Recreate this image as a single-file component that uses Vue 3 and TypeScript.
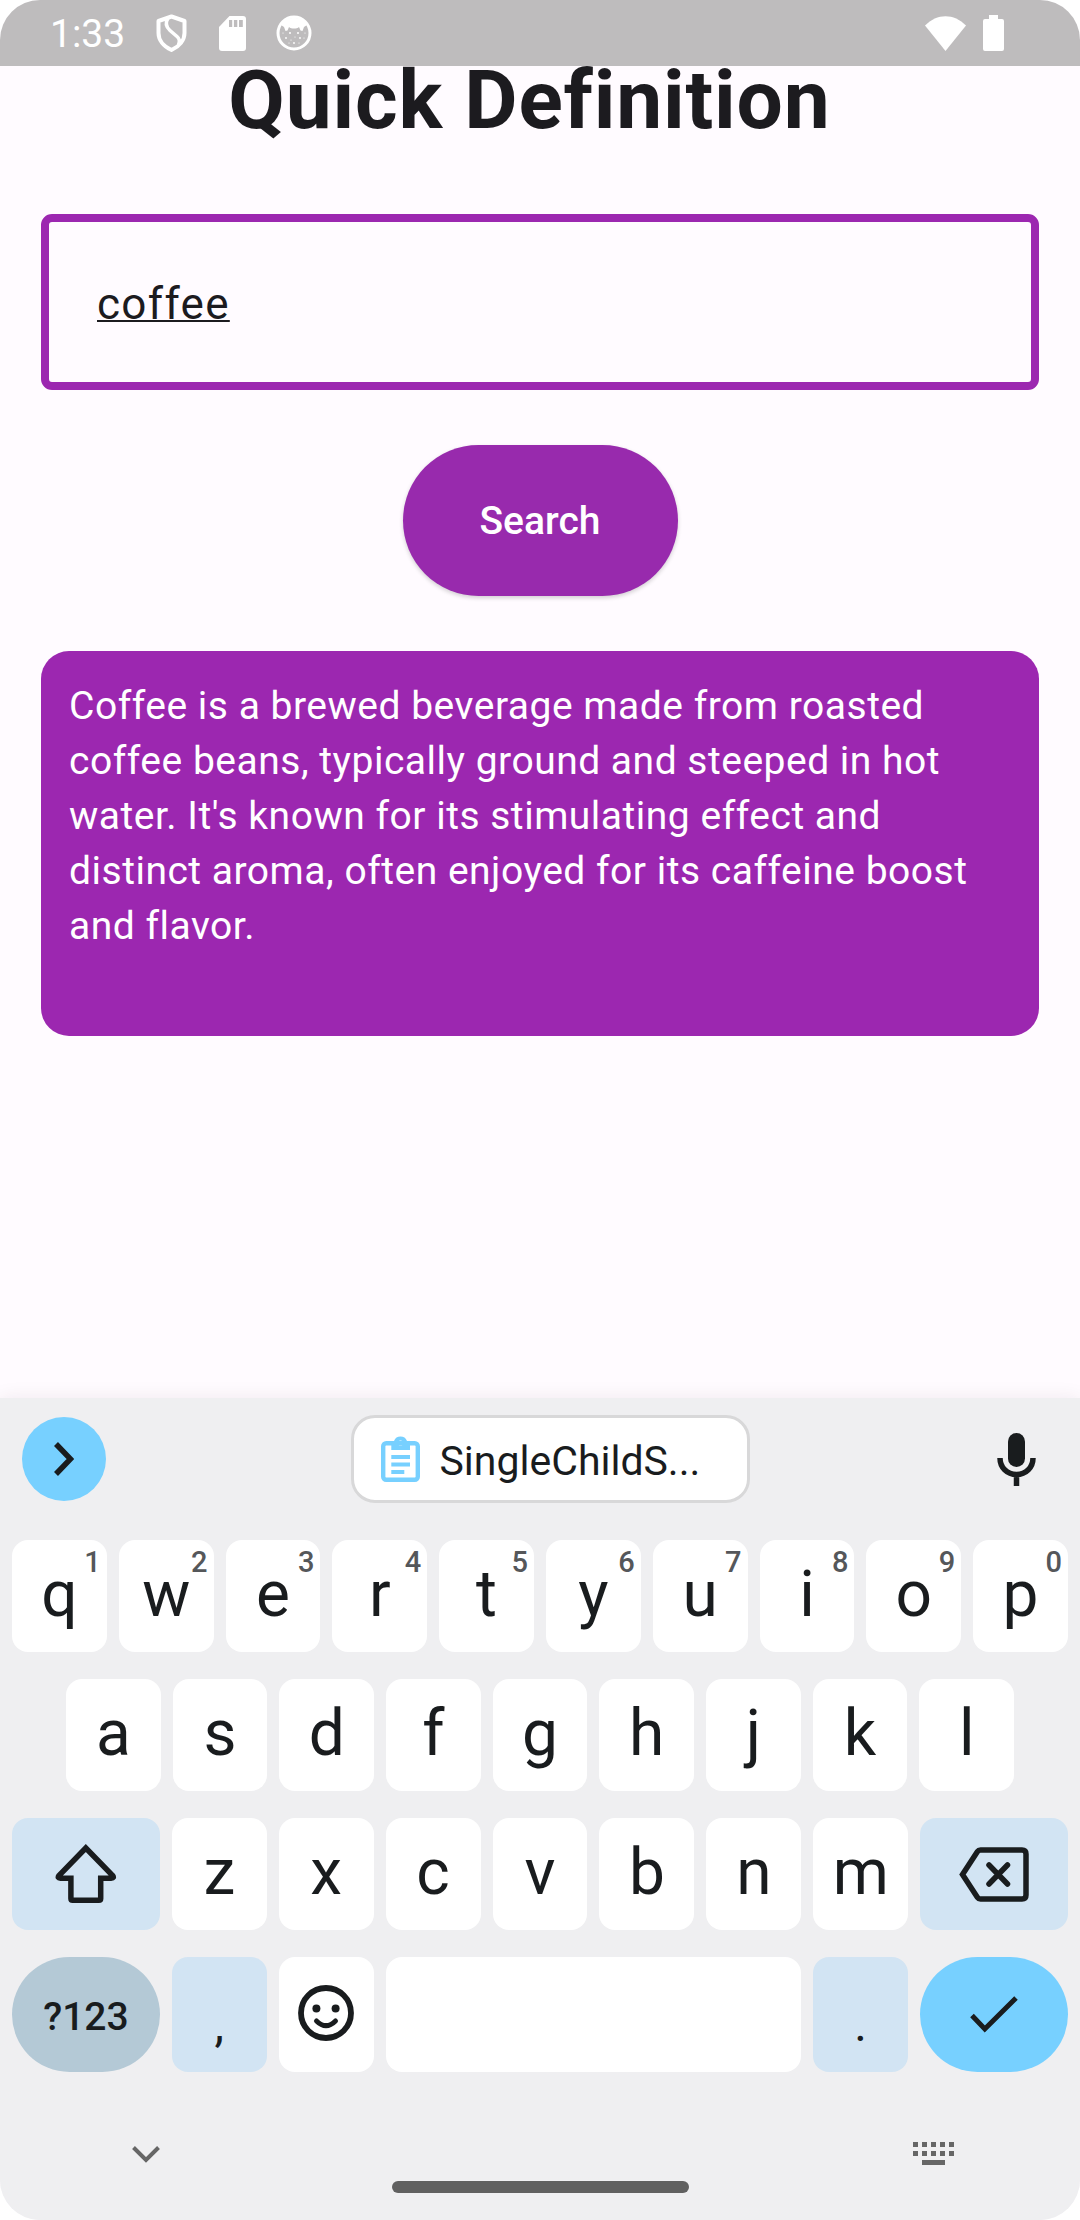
<script setup lang="ts">
import { ref } from 'vue'

interface Key {
  label: string
  hint?: string
}

const term = ref<string>('coffee')
const definition = ref<string>(
  "Coffee is a brewed beverage made from roasted coffee beans, typically ground and steeped in hot water. It's known for its stimulating effect and distinct aroma, often enjoyed for its caffeine boost and flavor."
)

const topRow: Key[] = [...'qwertyuiop'].map((label, i) => ({ label, hint: String((i + 1) % 10) }))
const homeRow: string[] = [...'asdfghjkl']
const bottomRow: string[] = [...'zxcvbnm']
const dotColumns: number[] = [0, 9, 18, 27, 36]

function press(char: string): void {
  term.value += char
}

function erase(): void {
  term.value = term.value.slice(0, -1)
}
</script>

<template>
  <div class="screen">
    <header class="status">
      <div class="status-group">
        <span class="clock">1:33</span>
        <svg class="shield" width="31" height="38" viewBox="0 0 31 38" fill="none" stroke="#fff" stroke-width="4">
          <path d="M15.500 2.500L28.500 7v12c0 7-5 13.500-13 17c-8-3.500-13-10-13-17V7z" stroke-linejoin="round" />
          <path d="M12 4c-3 5-2 9 2 12.500l7 6c3 2.500 3 5 1.500 8" stroke-width="3.500" />
        </svg>
        <svg class="sd" width="27" height="35" viewBox="0 0 27 35">
          <path fill="#fff" d="M10.500 0H24a3 3 0 0 1 3 3v29a3 3 0 0 1-3 3H3a3 3 0 0 1-3-3V11z" />
          <path fill="#bebcbd" d="M10 4h3.200v7H10zM14.900 4h3.400v7h-3.400zM20 4h3.800v7H20z" />
        </svg>
        <svg class="face" width="36" height="36" viewBox="0 0 36 36">
          <circle cx="18" cy="18" r="16" fill="none" stroke="#fff" stroke-width="3" />
          <path fill="#fff" d="M5 10C10 .5 26 .5 31 10l-3 2-1.500 4-2-.500-1.500-3.500c-2 2-8 2-10 0l-1.500 3.500-2 .500L8 12z" />
          <g fill="#fff">
            <circle cx="14" cy="18" r="1" /><circle cx="22" cy="18" r="1" />
            <circle cx="7" cy="18" r=".6" /><circle cx="29" cy="18" r=".6" />
            <circle cx="10" cy="23" r=".9" /><circle cx="15" cy="25" r=".6" />
            <circle cx="19" cy="22" r=".6" /><circle cx="24" cy="23" r=".9" />
            <circle cx="28" cy="23" r=".6" /><circle cx="13" cy="28" r=".6" />
            <circle cx="18" cy="28" r=".9" /><circle cx="23" cy="28" r=".6" />
          </g>
        </svg>
      </div>
      <div class="status-group">
        <svg width="41" height="35" viewBox="0 0 41 35" fill="#fff">
          <path d="M0 9.500C12-3 29-3 41 9.500L20.500 35z" />
        </svg>
        <svg class="battery" width="21" height="36" viewBox="0 0 21 36" fill="#fff">
          <path d="M6 0h9v4h4a2 2 0 0 1 2 2v28a2 2 0 0 1-2 2H2a2 2 0 0 1-2-2V6a2 2 0 0 1 2-2h4z" />
        </svg>
      </div>
    </header>

    <main class="content">
      <h1 class="title">{{ 'Quick Definition ' }}</h1>
      <input v-model="term" class="field" type="text" aria-label="Word to define" spellcheck="false" />
      <button class="search" type="button">Search</button>
      <p class="card">{{ definition }}</p>
    </main>

    <section class="keyboard" aria-label="Keyboard">
      <div class="suggestions">
        <button class="expand" type="button" aria-label="More tools">
          <svg width="20" height="34" viewBox="0 0 20 34" fill="none" stroke="#191c1e" stroke-width="5.500">
            <path d="M2 2l14.500 15L2 32" />
          </svg>
        </button>
        <button class="clip" type="button">
          <svg width="39" height="47" viewBox="0 0 39 47" fill="#77d0ff">
            <rect x="2.200" y="7.200" width="34.600" height="36.600" rx="3" fill="none" stroke="#77d0ff" stroke-width="4.400" />
            <path fill-rule="evenodd" d="M10.300 5H13a7 7 0 0 1 13 0h3v9H10.300zM19.500 4.400a2.600 2.600 0 1 0 0 5.200 2.600 2.600 0 0 0 0-5.200z" />
            <path d="M10.300 19H29v4H10.300zM10.300 26.500H29v4H10.300zM10.300 34h13v4h-13z" />
          </svg>
          <span class="clip-text">SingleChildS...</span>
        </button>
        <button class="mic" type="button" aria-label="Voice input">
          <svg width="39" height="53" viewBox="0 0 39 53">
            <rect x="11" y="0" width="17" height="34" rx="8.500" fill="#191c1e" />
            <path d="M3 25c0 9.500 7 16.500 16.500 16.500S36 34.500 36 25M19.500 41v12" fill="none" stroke="#191c1e" stroke-width="5.500" />
          </svg>
        </button>
      </div>

      <div class="rows">
        <div class="row">
          <button v-for="key in topRow" :key="key.label" class="key" type="button" @click="press(key.label)">
            {{ key.label }}<span class="hint">{{ key.hint }}</span>
          </button>
        </div>
        <div class="row inset">
          <button v-for="char in homeRow" :key="char" class="key" type="button" @click="press(char)">{{ char }}</button>
        </div>
        <div class="row">
          <button class="key wide tinted icon" type="button" aria-label="Shift">
            <svg width="62" height="60" viewBox="0 0 62 60" fill="none" stroke="#191c1e" stroke-width="5.500">
              <path d="M30.800 4L57.600 31.500q2 2.700-1.400 2.700H45.700V54.500q0 1.800-1.800 1.800H17.700q-1.800 0-1.800-1.800V34.200H5.400q-3.400 0-1.400-2.700z" />
            </svg>
          </button>
          <button v-for="char in bottomRow" :key="char" class="key" type="button" @click="press(char)">{{ char }}</button>
          <button class="key wide tinted icon" type="button" aria-label="Backspace" @click="erase">
            <svg width="70" height="55" viewBox="0 0 70 55" fill="none" stroke="#191c1e" stroke-width="5.500" stroke-linecap="round">
              <path d="M21.500 3H63q4 0 4 4V48q0 4-4 4H21.500q-2 0-3-1.500L3.500 27.500L18.500 4.500q1-1.500 3-1.500z" />
              <path d="M30 18l18.500 19M48.500 18L30 37" />
            </svg>
          </button>
        </div>
        <div class="row last">
          <button class="key wide symbols" type="button">?123</button>
          <button class="key tinted mark" type="button" @click="press(',')">,</button>
          <button class="key" type="button" aria-label="Emoji">
            <svg width="56" height="56" viewBox="0 0 56 56" fill="none" stroke="#191c1e">
              <circle cx="28" cy="28" r="25" stroke-width="5.800" />
              <circle cx="18.400" cy="23.400" r="4" fill="#191c1e" stroke="none" />
              <circle cx="37.600" cy="23.400" r="4" fill="#191c1e" stroke="none" />
              <path d="M18.500 36q9.500 9.500 19 0" stroke-width="5" stroke-linecap="round" />
            </svg>
          </button>
          <button class="key space" type="button" aria-label="Space" @click="press(' ')"></button>
          <button class="key tinted mark" type="button" @click="press('.')">.</button>
          <button class="key wide enter icon" type="button" aria-label="Done">
            <svg width="48" height="37" viewBox="0 0 48 37" fill="none" stroke="#191c1e" stroke-width="5">
              <path d="M2 19.500L14.800 33L46 2" />
            </svg>
          </button>
        </div>
      </div>

      <nav class="ime-nav">
        <button class="nav-button" type="button" aria-label="Hide keyboard">
          <svg width="28" height="17" viewBox="0 0 28 17" fill="none" stroke="#666" stroke-width="4">
            <path d="M1.500 1.500L14 14L26.500 1.500" />
          </svg>
        </button>
        <button class="nav-button" type="button" aria-label="Switch keyboard">
          <svg width="42" height="24" viewBox="0 0 42 24" fill="#666">
            <template v-for="x in dotColumns" :key="x">
              <rect :x="x" y="0" width="5" height="5" />
              <rect :x="x" y="9" width="5" height="5" />
            </template>
            <rect x="9" y="18" width="23" height="5" />
          </svg>
        </button>
      </nav>
      <div class="home-bar"></div>
    </section>
  </div>
</template>

<style>
body {
  margin: 0;
  background: #fff;
}
</style>

<style scoped>
.screen {
  display: flex;
  flex-direction: column;
  min-height: 100vh;
  border-radius: 40px;
  overflow: hidden;
  background: #fffbff;
  font-family: Roboto, 'Liberation Sans', sans-serif;
  color: #1c1b1f;
}

button {
  border: 0;
  padding: 0;
  font: inherit;
  color: inherit;
  cursor: pointer;
}

svg {
  display: block;
  flex: none;
}

.status {
  display: flex;
  align-items: center;
  justify-content: space-between;
  height: 66px;
  padding: 0 76px 0 50px;
  background: #bebcbd;
  color: #fff;
}

.status-group {
  display: flex;
  align-items: center;
}

.clock {
  padding-top: 2px;
  font-size: 39px;
  line-height: 64px;
}

.shield {
  margin-left: 31px;
}

.sd {
  margin-left: 32px;
}

.face {
  margin-left: 30px;
}

.battery {
  margin-left: 17px;
}

.content {
  flex: 1;
  display: flex;
  flex-direction: column;
  align-items: center;
  padding: 0 41px;
}

.title {
  margin: 0 0 80px;
  font-size: 82px;
  line-height: 68px;
  font-weight: 700;
  letter-spacing: 0.01em;
  white-space: pre;
}

.field {
  box-sizing: border-box;
  width: 100%;
  height: 176px;
  padding: 4px 48px 0;
  border: 8px solid #9c27b0;
  border-radius: 11px;
  outline: 0;
  background: transparent;
  font: inherit;
  font-size: 44px;
  letter-spacing: 0.03em;
  color: inherit;
  text-decoration: underline;
  text-decoration-thickness: 2px;
}

.search {
  width: 275px;
  height: 151px;
  margin: 55px 0;
  border-radius: 76px;
  background: #982aad;
  box-shadow: 0 2px 4px rgba(0, 0, 0, 0.18);
  color: #fff;
  font-size: 39px;
  font-weight: 500;
}

.card {
  box-sizing: border-box;
  width: 100%;
  min-height: 385px;
  margin: 0;
  padding: 28px;
  border-radius: 28px;
  background: #9c27b0;
  color: #fff;
  font-size: 39px;
  line-height: 55px;
  letter-spacing: 0.013em;
}

.keyboard {
  display: flex;
  flex-direction: column;
  padding: 17px 12px 27px;
  background: #efeff1;
  box-shadow: 0 0 18px rgba(60, 20, 40, 0.08);
  color: #191c1e;
}

.suggestions {
  display: flex;
  align-items: center;
  justify-content: space-between;
  height: 88px;
  padding: 0 10px;
}

.expand,
.mic {
  display: flex;
  align-items: center;
  justify-content: center;
  width: 84px;
  height: 84px;
  border-radius: 42px;
  background: transparent;
}

.expand {
  background: #77d0ff;
}

.clip {
  display: flex;
  align-items: center;
  gap: 20px;
  box-sizing: border-box;
  width: 399px;
  height: 88px;
  margin-left: 20px;
  padding: 0 27px;
  border: 3px solid #d8d8d9;
  border-radius: 24px;
  background: #fff;
  font-size: 41px;
}

.clip-text {
  padding-top: 4px;
}

.rows {
  display: flex;
  flex-direction: column;
  gap: 27px;
  margin-top: 37px;
}

.row {
  display: flex;
  gap: 12px;
  height: 112px;
}

.row.inset {
  padding: 0 54px;
}

.row.last {
  height: 115px;
}

.key {
  position: relative;
  display: flex;
  flex: 95 1 0;
  align-items: center;
  justify-content: center;
  padding-bottom: 4px;
  border-radius: 16px;
  background: #fff;
  font-size: 64px;
}

.key.wide {
  flex-grow: 148;
}

.key.icon {
  padding-bottom: 0;
}

.key.space {
  flex-grow: 416;
}

.key.tinted {
  background: #d2e4f3;
}

.key.symbols,
.key.enter {
  border-radius: 58px;
}

.key.symbols {
  padding: 4px 0 0;
  background: #b4c9d6;
  font-size: 39px;
  font-weight: 500;
}

.key.enter {
  background: #77d0ff;
}

.key.mark {
  padding: 20px 0 0;
  font-size: 48px;
}

.hint {
  position: absolute;
  top: 6px;
  right: 6px;
  font-size: 29px;
  line-height: 32px;
  font-weight: 500;
  color: #55575a;
}

.ime-nav {
  display: flex;
  justify-content: space-between;
  margin: 70px 0 15px;
  padding: 0 110px;
}

.nav-button {
  display: flex;
  align-items: center;
  justify-content: center;
  width: 48px;
  height: 24px;
  background: transparent;
}

.home-bar {
  align-self: center;
  width: 297px;
  height: 12px;
  border-radius: 6px;
  background: #606060;
}
</style>
